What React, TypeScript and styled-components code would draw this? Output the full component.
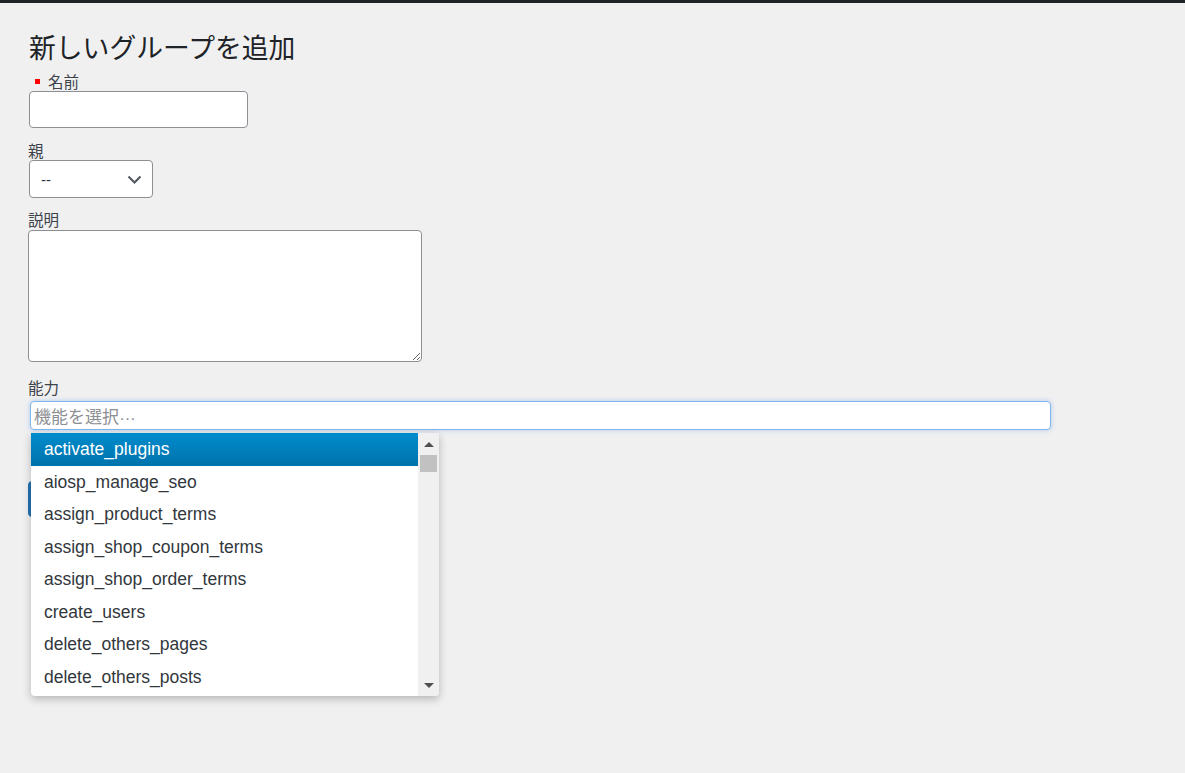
import React from 'react'
import styled, {createGlobalStyle} from 'styled-components'

const GlobalStyle = createGlobalStyle`
  html, body {
    margin: 0;
    padding: 0;
    background: #f0f0f1;
    font-family: "Liberation Sans", "Noto Sans CJK JP", sans-serif;
    color: #3c434a;
  }
`

const capabilities = [
  'activate_plugins',
  'aiosp_manage_seo',
  'assign_product_terms',
  'assign_shop_coupon_terms',
  'assign_shop_order_terms',
  'create_users',
  'delete_others_pages',
  'delete_others_posts',
]

const TopBar = styled.div`
  height: 3px;
  background: #1d2327;
`

const Wrap = styled.div`
  padding: 29px 0 0 28px;
  height: 738px;
`

const Title = styled.h1`
  margin: 0 0 0 1px;
  font-family: "Noto Sans CJK JP", sans-serif;
  font-size: 26.8px;
  line-height: 30px;
  font-weight: 400;
  color: #1d2327;
`

const Label = styled.div<{$gap: number}>`
  display: flex;
  align-items: center;
  margin-top: ${p => p.$gap}px;
  height: 18px;
  font-family: "Noto Sans CJK JP", sans-serif;
  font-size: 15.5px;
  line-height: 18px;
  color: #3c434a;
`

const Required = styled.span`
  flex: none;
  width: 5px;
  height: 5px;
  background: #f00;
  margin: 0 8px 0 7px;
`

const TextInput = styled.div`
  margin: 1px 0 0 1px;
  width: 219px;
  height: 37px;
  box-sizing: border-box;
  background: #fff;
  border: 1px solid #8c8f94;
  border-radius: 4px;
`

const Select = styled.div`
  margin: 1px 0 0 1px;
  width: 124px;
  height: 38px;
  box-sizing: border-box;
  background: #fff;
  border: 1px solid #8c8f94;
  border-radius: 4px;
  display: flex;
  align-items: center;
  justify-content: space-between;
  padding: 0 10px 0 11px;
  font-size: 15px;
  color: #2c3338;
`

const TextArea = styled.textarea`
  display: block;
  margin: 2px 0 0 0;
  width: 394px;
  height: 132px;
  box-sizing: border-box;
  background: #fff;
  border: 1px solid #8c8f94;
  border-radius: 4px;
  resize: both;
`

const ComboWrap = styled.div`
  position: relative;
  margin: 5px 0 0 2px;
  width: 1021px;
`

const SearchInput = styled.div`
  height: 29px;
  box-sizing: border-box;
  background: #fff;
  border: 1px solid #82b6ee;
  border-radius: 4px;
  box-shadow: 0 0 5px rgba(90, 155, 230, 0.45);
  display: flex;
  align-items: center;
  padding-left: 3px;
  font-family: "Noto Sans CJK JP", sans-serif;
  font-size: 17px;
  color: #8c8f94;
`

const Ellipsis = styled.span`
  font-family: "Liberation Sans", sans-serif;
  font-size: 17px;
  align-self: flex-end;
  margin-bottom: 4px;
`

const Dropdown = styled.div`
  position: absolute;
  top: 32px;
  left: 1px;
  width: 408px;
  height: 263px;
  display: flex;
  background: #fff;
  border-radius: 0 0 4px 4px;
  box-shadow: 0 3px 9px rgba(0, 0, 0, 0.25);
  overflow: hidden;
  z-index: 5;
`

const List = styled.ul`
  flex: 1;
  margin: 0;
  padding: 0;
  list-style: none;
`

const Item = styled.li<{$active?: boolean}>`
  height: 32.55px;
  line-height: 32.55px;
  padding-left: 13px;
  font-size: 17.5px;
  color: ${p => (p.$active ? '#fff' : '#32373c')};
  background: ${p =>
    p.$active ? 'linear-gradient(#008bcc, #0073ac)' : 'transparent'};
`

const ScrollBar = styled.div`
  width: 21px;
  background: #f0f0f0;
  display: flex;
  flex-direction: column;
  align-items: center;
`

const Arrow = styled.span<{$down?: boolean}>`
  width: 0;
  height: 0;
  border-left: 5px solid transparent;
  border-right: 5px solid transparent;
  ${p =>
    p.$down
      ? 'border-top: 5px solid #505050; margin-top: auto; margin-bottom: 8px;'
      : 'border-bottom: 5px solid #505050; margin-top: 9px;'}
`

const Thumb = styled.span`
  width: 17px;
  height: 17px;
  margin-top: 8px;
  background: #c1c1c1;
`

const SubmitButton = styled.button`
  display: block;
  margin-top: 51px;
  width: 180px;
  height: 36px;
  padding: 0 14px;
  border: 1px solid #2271b1;
  border-radius: 4px;
  background: #2271b1;
`

const Chevron = () => (
  <svg width="15" height="9" viewBox="0 0 15 9">
    <path d="M1.5 1.5 L7.5 7.5 L13.5 1.5" fill="none" stroke="#50575e" strokeWidth="2" />
  </svg>
)

const App = () => {
  return (
    <>
      <GlobalStyle />
      <TopBar />
      <Wrap>
        <Title>新しいグループを追加</Title>
        <Label $gap={10}>
          <Required />
          名前
        </Label>
        <TextInput />
        <Label $gap={13}>親</Label>
        <Select>
          <span>--</span>
          <Chevron />
        </Select>
        <Label $gap={12}>説明</Label>
        <TextArea />
        <Label $gap={16}>能力</Label>
        <ComboWrap>
          <SearchInput>
            機能を選択<Ellipsis>…</Ellipsis>
          </SearchInput>
          <Dropdown>
            <List>
              {capabilities.map((c, i) => (
                <Item key={c} $active={i === 0}>
                  {c}
                </Item>
              ))}
            </List>
            <ScrollBar>
              <Arrow />
              <Thumb />
              <Arrow $down />
            </ScrollBar>
          </Dropdown>
        </ComboWrap>
        <SubmitButton aria-label="新しいグループを追加" />
      </Wrap>
    </>
  )
}

export default App
